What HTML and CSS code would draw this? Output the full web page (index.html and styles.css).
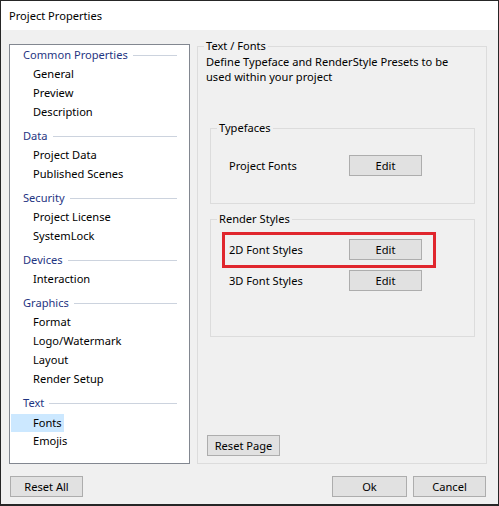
FILE: index.html
```html
<!DOCTYPE html>
<html>
<head>
<meta charset="utf-8">
<title>Project Properties</title>
<link rel="stylesheet" href="styles.css">
</head>
<body>
<div class="window">
  <div class="titlebar">Project Properties</div>
  <div class="content">
    <div class="tree">
      <div class="group">
        <div class="group-head">Common Properties</div>
        <div class="item"><span>General</span></div>
        <div class="item"><span>Preview</span></div>
        <div class="item"><span>Description</span></div>
      </div>
      <div class="group">
        <div class="group-head">Data</div>
        <div class="item"><span>Project Data</span></div>
        <div class="item"><span>Published Scenes</span></div>
      </div>
      <div class="group">
        <div class="group-head">Security</div>
        <div class="item"><span>Project License</span></div>
        <div class="item"><span>SystemLock</span></div>
      </div>
      <div class="group">
        <div class="group-head">Devices</div>
        <div class="item"><span>Interaction</span></div>
      </div>
      <div class="group">
        <div class="group-head">Graphics</div>
        <div class="item"><span>Format</span></div>
        <div class="item"><span>Logo/Watermark</span></div>
        <div class="item"><span>Layout</span></div>
        <div class="item"><span>Render Setup</span></div>
      </div>
      <div class="group">
        <div class="group-head">Text</div>
        <div class="item selected"><span>Fonts</span></div>
        <div class="item"><span>Emojis</span></div>
      </div>
    </div>

    <fieldset class="page">
      <legend>Text / Fonts</legend>
      <p class="desc">Define Typeface and RenderStyle Presets to be<br>used within your project</p>
      <fieldset class="sub typefaces">
        <legend>Typefaces</legend>
        <div class="row"><span class="label">Project Fonts</span><button class="btn">Edit</button></div>
      </fieldset>
      <fieldset class="sub render">
        <legend>Render Styles</legend>
        <div class="row marked"><span class="label">2D Font Styles</span><button class="btn">Edit</button></div>
        <div class="row"><span class="label">3D Font Styles</span><button class="btn">Edit</button></div>
      </fieldset>
      <button class="btn reset-page">Reset Page</button>
    </fieldset>

    <div class="left-actions"><button class="btn">Reset All</button></div>
    <div class="right-actions"><button class="btn ok">Ok</button><button class="btn cancel">Cancel</button></div>
  </div>
</div>
</body>
</html>
```

FILE: styles.css
```css
html, body {
  margin: 0;
  padding: 0;
  background: #f0f0f0;
}

body {
  font-family: "Noto Sans", "Liberation Sans", sans-serif;
  font-size: 11.1px;
  color: #000;
}

.window {
  width: 499px;
  height: 506px;
  box-sizing: border-box;
  border: 1px solid #262626;
  border-bottom-width: 2px;
  display: flex;
  flex-direction: column;
  background: #f0f0f0;
}

.titlebar {
  height: 29px;
  line-height: 29px;
  padding-left: 8px;
  background: #fff;
  flex: none;
}

.content {
  flex: 1;
  display: grid;
  grid-template-columns: 181px 290px;
  grid-template-rows: 1fr 21px;
  column-gap: 7px;
  row-gap: 12px;
  padding: 8px 11px 7px 8px;
  min-height: 0;
}

/* tree */
.tree {
  margin-top: 6px;
  background: #fff;
  border: 1px solid #828790;
}

.group + .group {
  margin-top: 4px;
}

.group-head {
  height: 20px;
  line-height: 20px;
  padding-left: 13px;
  color: #1f3582;
  display: flex;
  align-items: center;
}

.group-head::after {
  content: "";
  flex: 1;
  border-top: 1px solid #ccd3de;
  margin: 0 12px 0 5px;
}

.item {
  height: 19px;
}

.item span {
  display: inline-block;
  height: 18px;
  line-height: 18px;
  margin: 0 0 0 1px;
  padding: 0 2px 0 22px;
}

.item.selected span {
  background: #cce8ff;
  margin-top: 1px;
}

/* page */
fieldset {
  margin: 0;
  min-width: 0;
  border: 1px solid #dcdcdc;
}

legend {
  padding: 0 2px;
  line-height: 16px;
}

.page {
  padding: 0 9px 7px 6px;
  display: flex;
  flex-direction: column;
}

.desc {
  margin: 0;
  padding-left: 2px;
  line-height: 15px;
}

.sub {
  margin: 0 2px 0 6px;
  padding: 0 0 0 6px;
}

.typefaces {
  margin-top: 36px;
  padding-top: 19px;
  padding-bottom: 27px;
}

.render {
  margin-top: 7px;
  padding-top: 12px;
  padding-bottom: 45px;
}

.row {
  display: flex;
  align-items: center;
  margin-left: 12px;
  height: 21px;
}

.row + .row {
  margin-top: 10px;
}

.row .label {
  width: 120px;
  flex: none;
}

.row.marked {
  position: relative;
}

.row.marked::after {
  content: "";
  position: absolute;
  left: -7px;
  top: -7px;
  width: 214px;
  height: 36px;
  box-sizing: border-box;
  border: 3px solid #e0262d;
}

.btn {
  font: inherit;
  color: #000;
  width: 73px;
  height: 21px;
  padding: 0;
  background: #e1e1e1;
  border: 1px solid #adadad;
  border-radius: 0;
  box-sizing: border-box;
  line-height: 19px;
}

.reset-page {
  margin-top: auto;
  margin-left: 3px;
  align-self: flex-start;
}

.left-actions {
  padding-left: 1px;
}

.right-actions {
  display: flex;
  justify-content: flex-end;
  gap: 6px;
  padding-right: 1px;
}

.btn.ok {
  width: 75px;
}
```
